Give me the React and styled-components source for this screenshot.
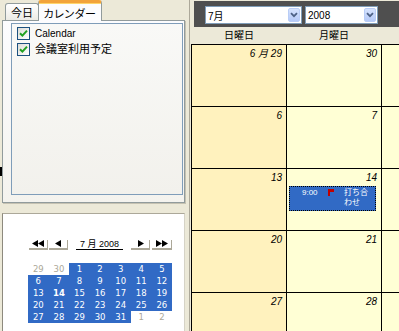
import React from "react";
import styled, { createGlobalStyle } from "styled-components";

const GlobalStyle = createGlobalStyle`
  html, body {
    margin: 0;
    padding: 0;
  }
  body {
    background: #ece9d8;
    font-family: "Liberation Sans", "Noto Sans CJK JP", sans-serif;
    font-size: 10px;
    color: #000;
  }
`;

const Screen = styled.div`
  position: relative;
  display: flex;
  width: 399px;
  height: 331px;
  overflow: hidden;
  background: #ece9d8;
`;

const EdgeTick = styled.div`
  position: absolute;
  left: 0;
  top: 167px;
  width: 2px;
  height: 9px;
  background: #000;
`;

/* ---------- left side ---------- */

const LeftPane = styled.div`
  width: 189px;
  flex-shrink: 0;
  box-sizing: border-box;
  padding: 0 4px 0 2px;
  display: flex;
  flex-direction: column;
`;

const TabRow = styled.div`
  display: flex;
  align-items: flex-end;
  height: 20px;
  padding-left: 3px;
  position: relative;
  z-index: 1;
`;

const Tab = styled.div`
  box-sizing: border-box;
  display: flex;
  align-items: center;
  justify-content: center;
  font-size: 11px;
  font-feature-settings: "palt";
  border: 1px solid #919b9c;
  border-bottom: none;
  border-radius: 3px 3px 0 0;
  ${(p) =>
    p.$active
      ? `
    width: 64px;
    height: 21px;
    margin-bottom: -1px;
    background: #fcfcfe;
    border-top: 3px solid #f2a33a;
    box-shadow: inset 0 1px 0 #ffd56a;
    padding-top: 1px;
    letter-spacing: 0.5px;
  `
      : `
    width: 34px;
    height: 17px;
    margin-right: -1px;
    background: linear-gradient(#ffffff, #ecebe5);
  `}
`;

const TabPanel = styled.div`
  box-sizing: border-box;
  height: 183px;
  border: 1px solid #919b9c;
  box-shadow: 1px 1px 0 #c5c2b2;
  background: linear-gradient(#fcfcfe, #f4f3ee);
  display: flex;
  flex-direction: column;
`;

const ListBox = styled.div`
  flex: 1;
  margin: 2px 1px 7px 8px;
  border: 1px solid #7f9db9;
  background: linear-gradient(#f9f9f7, #f2f1ec);
  padding: 3px 0 0 5px;
  display: flex;
  flex-direction: column;
  gap: 3px;
`;

const ListItem = styled.div`
  display: flex;
  align-items: center;
  gap: 5px;
  height: 13px;
`;

const CheckBox = styled.div`
  box-sizing: border-box;
  width: 13px;
  height: 13px;
  border: 1px solid #1c5180;
  background: linear-gradient(135deg, #dcdcd7, #ffffff);
  display: flex;
  align-items: center;
  justify-content: center;
`;

const ItemLabel = styled.span`
  font-size: ${(p) => p.$size}px;
  line-height: 13px;
  white-space: nowrap;
`;

const LowerBox = styled.div`
  flex: 1;
  margin-top: 10px;
  background: #ffffff;
  border-top: 1px solid #aca899;
  border-left: 1px solid #8d8a7e;
  border-right: 1px solid #d6d3c6;
  padding: 26px 0 0 25px;
`;

const MiniNav = styled.div`
  display: flex;
  align-items: flex-start;
  height: 10px;
  margin-left: 1px;
`;

const NavButton = styled.div`
  box-sizing: border-box;
  width: ${(p) => p.$w}px;
  height: 10px;
  margin-right: ${(p) => p.$gap}px;
  border-right: 1px solid #aca899;
  border-bottom: 2px solid #aca899;
  display: flex;
  align-items: flex-start;
  justify-content: center;
`;

const MonthLabel = styled.div`
  box-sizing: border-box;
  width: 47px;
  height: 10px;
  margin-right: 8px;
  border-bottom: 1px solid #000;
  font-size: 9px;
  line-height: 9px;
  text-align: center;
  white-space: nowrap;
`;

const DayGrid = styled.div`
  margin-top: 13px;
  display: grid;
  grid-template-columns: repeat(7, 20.6px);
  grid-auto-rows: 12px;
`;

const Day = styled.div`
  font-family: "DejaVu Sans", sans-serif;
  font-size: 8.5px;
  line-height: 12px;
  text-align: center;
  font-weight: ${(p) => (p.$bold ? 700 : 400)};
  background: ${(p) => (p.$in ? "#316ac5" : "#ffffff")};
  color: ${(p) => (p.$in ? "#ffffff" : "#aca899")};
`;

/* ---------- right side ---------- */

const Splitter = styled.div`
  width: 1px;
  flex-shrink: 0;
  background: #aca899;
`;

const RightPane = styled.div`
  flex: 1;
  min-width: 0;
  overflow: hidden;
  display: flex;
  flex-direction: column;
`;

const Toolbar = styled.div`
  box-sizing: border-box;
  height: 26px;
  margin: 1px 0 0 4px;
  padding: 5px 0 3px 11px;
  background: #4f4f4f;
  display: flex;
  gap: 3px;
`;

const Combo = styled.div`
  box-sizing: border-box;
  width: ${(p) => p.$w}px;
  height: 18px;
  border: 1px solid #7f9db9;
  background: #fff;
  display: flex;
  align-items: center;
  justify-content: space-between;
  padding: 0 1px 0 2px;
  font-size: 10px;
`;

const ComboButton = styled.div`
  box-sizing: border-box;
  width: 12px;
  height: 14px;
  border: 1px solid #b9cdf6;
  border-radius: 2px;
  background: linear-gradient(#d6e3fd, #b5c9f7);
  display: flex;
  align-items: center;
  justify-content: center;
`;

const HeaderRow = styled.div`
  height: 17px;
  padding-left: 2px;
  display: grid;
  grid-template-columns: repeat(3, 95px);
`;

const HeaderCell = styled.div`
  font-size: 10px;
  line-height: 17px;
  text-align: center;
  padding-right: 1px;
`;

const MonthGrid = styled.div`
  margin-left: 1px;
  border-left: 1px solid #000;
  border-top: 1px solid #000;
  display: grid;
  grid-template-columns: repeat(3, 95px);
  grid-auto-rows: 62px;
`;

const Cell = styled.div`
  box-sizing: border-box;
  border-right: 1px solid #000;
  border-bottom: 1px solid #000;
  background: ${(p) => (p.$sunday ? "#fff2be" : "#ffffd5")};
  padding: 3px 0 0 0;
`;

const DateLabel = styled.div`
  font-size: 10px;
  font-style: italic;
  line-height: 12px;
  height: 12px;
  text-align: right;
  padding-right: 4px;
`;

const Event = styled.div`
  box-sizing: border-box;
  width: 87px;
  height: 25px;
  margin: 2px 0 0 2px;
  border: 1px dotted #000;
  background: #316ac5;
  color: #fff;
  display: flex;
  align-items: flex-start;
  padding: 1px 0 0 12px;
  font-size: 8px;
  line-height: 10px;
`;

const EventTime = styled.span`
  width: 26px;
  flex-shrink: 0;
`;

const EventFlag = styled.svg`
  flex-shrink: 0;
  margin: 1px 10px 0 0;
`;

const EventTitle = styled.span`
  width: 26px;
  word-break: break-all;
`;

const Triangle = ({ dir, count = 1 }) => {
  const w = 6 * count;
  return (
    <svg width={w + 1} height="7" viewBox={`0 0 ${w + 1} 7`}>
      {Array.from({ length: count }).map((_, i) => {
        const x = i * 6;
        return dir === "left" ? (
          <polygon key={i} points={`${x + 6},0 ${x},3.5 ${x + 6},7`} fill="#000" />
        ) : (
          <polygon key={i} points={`${x + 1},0 ${x + 7},3.5 ${x + 1},7`} fill="#000" />
        );
      })}
    </svg>
  );
};

const Check = () => (
  <svg width="9" height="9" viewBox="0 0 9 9">
    <path d="M1 4.2 L3.4 6.6 L8 1.6" stroke="#21a121" strokeWidth="2" fill="none" />
  </svg>
);

const Chevron = () => (
  <svg width="8" height="6" viewBox="0 0 8 6">
    <path d="M1 1.2 L4 4.2 L7 1.2" stroke="#4d6185" strokeWidth="1.8" fill="none" />
  </svg>
);

const miniDays = [
  [29, false], [30, false], [1, true], [2, true], [3, true], [4, true], [5, true],
  [6, true], [7, true], [8, true], [9, true], [10, true], [11, true], [12, true],
  [13, true], [14, true], [15, true], [16, true], [17, true], [18, true], [19, true],
  [20, true], [21, true], [22, true], [23, true], [24, true], [25, true], [26, true],
  [27, true], [28, true], [29, true], [30, true], [31, true], [1, false], [2, false],
];

const weeks = [
  ["6 月 29", "30", ""],
  ["6", "7", ""],
  ["13", "14", ""],
  ["20", "21", ""],
  ["27", "28", ""],
];

export default function App() {
  return (
    <>
      <GlobalStyle />
      <Screen>
        <EdgeTick />
        <LeftPane>
          <TabRow>
            <Tab>今日</Tab>
            <Tab $active>カレンダー</Tab>
          </TabRow>
          <TabPanel>
            <ListBox>
              <ListItem>
                <CheckBox>
                  <Check />
                </CheckBox>
                <ItemLabel $size={10}>Calendar</ItemLabel>
              </ListItem>
              <ListItem>
                <CheckBox>
                  <Check />
                </CheckBox>
                <ItemLabel $size={11}>会議室利用予定</ItemLabel>
              </ListItem>
            </ListBox>
          </TabPanel>
          <LowerBox>
            <MiniNav>
              <NavButton $w={19} $gap={1}>
                <Triangle dir="left" count={2} />
              </NavButton>
              <NavButton $w={19} $gap={8}>
                <Triangle dir="left" />
              </NavButton>
              <MonthLabel>7 月 2008</MonthLabel>
              <NavButton $w={19} $gap={2}>
                <Triangle dir="right" />
              </NavButton>
              <NavButton $w={20} $gap={0}>
                <Triangle dir="right" count={2} />
              </NavButton>
            </MiniNav>
            <DayGrid>
              {miniDays.map(([d, inMonth], i) => (
                <Day key={i} $in={inMonth} $bold={inMonth && d === 14}>
                  {d}
                </Day>
              ))}
            </DayGrid>
          </LowerBox>
        </LeftPane>
        <Splitter />
        <RightPane>
          <Toolbar>
            <Combo $w={97}>
              <span>7月</span>
              <ComboButton>
                <Chevron />
              </ComboButton>
            </Combo>
            <Combo $w={73}>
              <span>2008</span>
              <ComboButton>
                <Chevron />
              </ComboButton>
            </Combo>
          </Toolbar>
          <HeaderRow>
            <HeaderCell>日曜日</HeaderCell>
            <HeaderCell>月曜日</HeaderCell>
            <HeaderCell />
          </HeaderRow>
          <MonthGrid>
            {weeks.map((week, wi) =>
              week.map((label, di) => (
                <Cell key={`${wi}-${di}`} $sunday={di === 0}>
                  <DateLabel>{label}</DateLabel>
                  {wi === 2 && di === 1 && (
                    <Event>
                      <EventTime>9:00</EventTime>
                      <EventFlag width="6" height="7" viewBox="0 0 6 7">
                        <rect x="0" y="0" width="2" height="7" fill="#c00000" />
                        <rect x="2" y="0" width="4" height="3" fill="#c00000" />
                      </EventFlag>
                      <EventTitle>打ち合わせ</EventTitle>
                    </Event>
                  )}
                </Cell>
              ))
            )}
          </MonthGrid>
        </RightPane>
      </Screen>
    </>
  );
}
